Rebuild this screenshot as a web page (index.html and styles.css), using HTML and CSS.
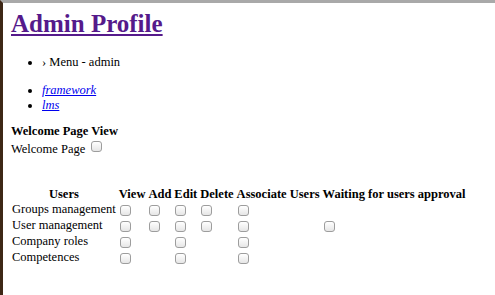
FILE: index.html
```html
<!DOCTYPE html>
<html lang="en">
<head>
    <meta charset="UTF-8">
    <title>Admin Profile</title>
    <link rel="stylesheet" href="styles.css">
</head>
<body>
    <div class="page">
        <h1><a href="#" class="visited">Admin Profile</a></h1>

        <ul class="crumbs">
            <li>&rsaquo; Menu - admin</li>
        </ul>

        <ul class="modules">
            <li><a href="#"><em>framework</em></a></li>
            <li><a href="#"><em>lms</em></a></li>
        </ul>

        <div class="section">
            <div class="section-title">Welcome Page View</div>
            <label class="welcome">Welcome Page <input type="checkbox"></label>
        </div>

        <table class="perms">
            <tr>
                <th>Users</th>
                <th>View</th>
                <th>Add</th>
                <th>Edit</th>
                <th>Delete</th>
                <th>Associate Users</th>
                <th>Waiting for users approval</th>
            </tr>
            <tr>
                <td>Groups management</td>
                <td><input type="checkbox"></td>
                <td><input type="checkbox"></td>
                <td><input type="checkbox"></td>
                <td><input type="checkbox"></td>
                <td><input type="checkbox"></td>
                <td></td>
            </tr>
            <tr>
                <td>User management</td>
                <td><input type="checkbox"></td>
                <td><input type="checkbox"></td>
                <td><input type="checkbox"></td>
                <td><input type="checkbox"></td>
                <td><input type="checkbox"></td>
                <td><input type="checkbox"></td>
            </tr>
            <tr>
                <td>Company roles</td>
                <td><input type="checkbox"></td>
                <td></td>
                <td><input type="checkbox"></td>
                <td></td>
                <td><input type="checkbox"></td>
                <td></td>
            </tr>
            <tr>
                <td>Competences</td>
                <td><input type="checkbox"></td>
                <td></td>
                <td><input type="checkbox"></td>
                <td></td>
                <td><input type="checkbox"></td>
                <td></td>
            </tr>
        </table>
    </div>
</body>
</html>
```

FILE: styles.css
```css
html, body {
    margin: 0;
    padding: 0;
    height: 100%;
    background-color: #fff;
}
body {
    font-family: "Liberation Serif", "Times New Roman", serif;
    font-size: 12.5px;
    color: #000;
}
.page {
    min-height: 100%;
    box-sizing: border-box;
    border-top: 3px solid #a9a9a9;
    border-left: 3px solid #3d2716;
    padding: 0 8px;
}
h1 {
    font-size: 25px;
    margin: 7px 0 17px;
}
h1 a.visited {
    color: #551a8b;
}
ul {
    margin: 13px 0 11px;
    padding-left: 31px;
}
.modules a {
    color: #0000ee;
}
.section-title {
    font-weight: bold;
}
.welcome input {
    margin-left: 9px;
}
.perms {
    margin: 29px 0 0 -1px;
    border-spacing: 1px;
}
.perms th,
.perms td {
    padding: 0 1px;
    line-height: 15px;
    text-align: left;
    font-weight: normal;
}
.perms th {
    line-height: 14px;
    font-weight: bold;
    text-align: center;
}
.perms input[type="checkbox"] {
    margin: 0 2px 0 1px;
    vertical-align: middle;
}
input[type="checkbox"] {
    -webkit-appearance: none;
    appearance: none;
    width: 11px;
    height: 11px;
    margin: 2px 2px 2px 3px;
    border: 1px solid #9d9d9d;
    border-radius: 3px;
    background: linear-gradient(#ffffff, #e6e6e6);
    vertical-align: -1px;
    box-sizing: border-box;
}
```
